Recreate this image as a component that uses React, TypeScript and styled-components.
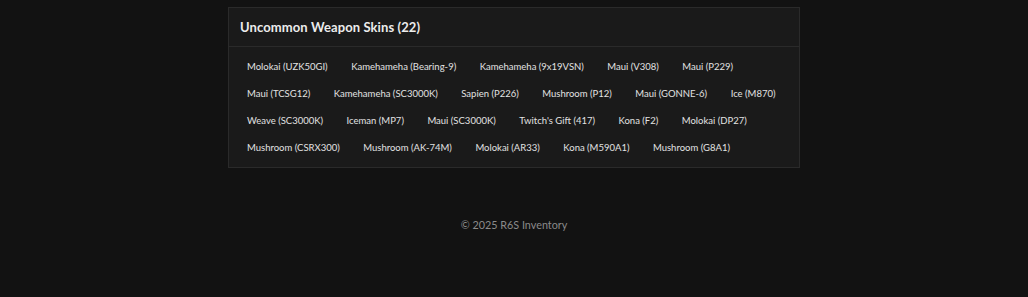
import React from "react";
import styled, { createGlobalStyle } from "styled-components";

const skins = [
  "Molokai (UZK50GI)",
  "Kamehameha (Bearing-9)",
  "Kamehameha (9x19VSN)",
  "Maui (V308)",
  "Maui (P229)",
  "Maui (TCSG12)",
  "Kamehameha (SC3000K)",
  "Sapien (P226)",
  "Mushroom (P12)",
  "Maui (GONNE-6)",
  "Ice (M870)",
  "Weave (SC3000K)",
  "Iceman (MP7)",
  "Maui (SC3000K)",
  "Twitch's Gift (417)",
  "Kona (F2)",
  "Molokai (DP27)",
  "Mushroom (CSRX300)",
  "Mushroom (AK-74M)",
  "Molokai (AR33)",
  "Kona (M590A1)",
  "Mushroom (G8A1)",
];

const GlobalStyle = createGlobalStyle`
  body {
    margin: 0;
    background: #121212;
    font-family: Lato, "Open Sans", sans-serif;
  }
`;

const App = () => {
  return (
    <>
      <GlobalStyle />
      <Page>
        <Panel>
          <Header>Uncommon Weapon Skins ({skins.length})</Header>
          <List>
            {skins.map((s) => (
              <Chip key={s}>{s}</Chip>
            ))}
          </List>
        </Panel>
        <Footer>© 2025 R6S Inventory</Footer>
      </Page>
    </>
  );
};

export default App;

const Page = styled.div`
  width: 100%;
  height: 297px;
  padding-top: 7px;
  box-sizing: border-box;
  display: flex;
  flex-direction: column;
  align-items: center;
`;

const Panel = styled.div`
  width: 572px;
  box-sizing: border-box;
  background: #1a1a1a;
  border: 1px solid #2a2a2a;
`;

const Header = styled.div`
  height: 38px;
  padding: 0 11px;
  display: flex;
  align-items: center;
  border-bottom: 1px solid #2a2a2a;
  color: #ececec;
  font-size: 13px;
  font-weight: 700;
  letter-spacing: 0.1px;
`;

const List = styled.div`
  display: flex;
  flex-wrap: wrap;
  gap: 7px 23.5px;
  padding: 10px 18px 9px 18px;
`;

const Chip = styled.div`
  height: 20px;
  line-height: 20px;
  font-size: 9.5px;
  color: #e2e2e2;
  white-space: nowrap;
`;

const Footer = styled.div`
  margin-top: 50px;
  color: #8a8a8a;
  font-size: 10.8px;
`;
